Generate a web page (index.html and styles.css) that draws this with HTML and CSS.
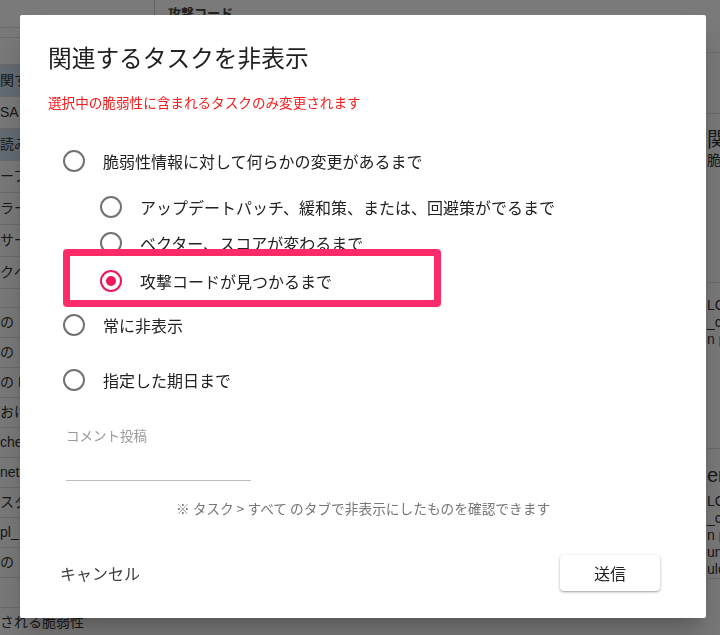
FILE: index.html
```html
<!DOCTYPE html>
<html lang="ja">

<head>
    <meta charset="UTF-8">
    <meta name="viewport" content="width=device-width, initial-scale=1.0">
    <title>関連するタスクを非表示</title>
    <link rel="stylesheet" href="styles.css">
</head>

<body>
    <div class="page">
        <div class="list-col">
            <div class="list-head"></div>
            <div class="list-sub"></div>
            <ul class="vuln-list">
                <li class="row row-blank"></li>
                <li class="row row-active">関する脆弱性</li>
                <li class="row">SA e</li>
                <li class="row row-active">読み込み</li>
                <li class="row">ーフロー</li>
                <li class="row">ラー</li>
                <li class="row">サービス</li>
                <li class="row">クベース</li>
                <li class="row row-gap"></li>
                <li class="row row-short">の</li>
                <li class="row row-short">の</li>
                <li class="row row-short">の R</li>
                <li class="row row-short">おける</li>
                <li class="row row-short">chesa</li>
                <li class="row row-short">netlink</li>
                <li class="row row-short">スタック</li>
                <li class="row row-short">pl_</li>
                <li class="row row-short">の</li>
                <li class="row row-short"></li>
                <li class="row row-short">される脆弱性</li>
            </ul>
        </div>

        <div class="main-col">
            <div class="main-head">攻撃コード</div>
        </div>

        <aside class="detail">
            <div class="detail-block detail-top"></div>
            <div class="detail-block detail-mid"></div>
            <div class="detail-block detail-info">
                <h2>関連する脆弱性</h2>
                <p>脆弱性</p>
            </div>
            <div class="detail-block detail-code">
                <p>LGPL</p>
                <p>_cpe</p>
                <p>n pa</p>
            </div>
            <div class="detail-block">
                <h2>en</h2>
                <p>LGPL</p>
                <p>_cpe</p>
                <p>n pa</p>
                <p>unc</p>
                <p>uld</p>
            </div>
        </aside>
    </div>

    <div class="backdrop"></div>

    <div class="dialog">
        <h1 class="dialog-title">関連するタスクを非表示</h1>
        <p class="dialog-warning">選択中の脆弱性に含まれるタスクのみ変更されます</p>

        <div class="options">
            <label class="option">
                <span class="radio"></span>
                <span>脆弱性情報に対して何らかの変更があるまで</span>
            </label>
            <label class="option option-sub option-sub-first">
                <span class="radio"></span>
                <span>アップデートパッチ、緩和策、または、回避策がでるまで</span>
            </label>
            <label class="option option-sub">
                <span class="radio"></span>
                <span>ベクター、スコアが変わるまで</span>
            </label>
            <label class="option option-sub option-picked">
                <span class="radio radio-on"></span>
                <span>攻撃コードが見つかるまで</span>
            </label>
            <label class="option option-always">
                <span class="radio"></span>
                <span>常に非表示</span>
            </label>
            <label class="option option-date">
                <span class="radio"></span>
                <span>指定した期日まで</span>
            </label>
        </div>

        <div class="comment">
            <div class="comment-label">コメント投稿</div>
            <div class="comment-input"></div>
        </div>

        <p class="note">※ タスク &gt; すべて のタブで非表示にしたものを確認できます</p>

        <div class="actions">
            <button class="btn-text">キャンセル</button>
            <button class="btn-raised">送信</button>
        </div>

        <div class="mark"></div>
    </div>
</body>

</html>
```

FILE: styles.css
```css
body {
    margin: 0;
    overflow: hidden;
    font-family: "Liberation Sans", "Noto Sans CJK JP", sans-serif;
    background-color: #fff;
    color: #333;
}

/* page behind the dialog */

.page {
    display: flex;
    height: 635px;
}

.list-col {
    width: 155px;
    flex: none;
}

.list-head {
    height: 28px;
    border-right: 1px solid #d0d0d0;
    border-bottom: 1px solid #ddd;
    box-sizing: border-box;
}

.list-sub {
    height: 9px;
    border-bottom: 1px solid #ddd;
}

.vuln-list {
    list-style: none;
    margin: 0;
    padding: 0;
}

.row {
    height: 31px;
    line-height: 31px;
    border-bottom: 1px solid #ddd;
    font-size: 14px;
    white-space: nowrap;
    overflow: hidden;
}

.row-blank {
    height: 26px;
}

.row-gap {
    height: 18px;
}

.row-short {
    height: 29px;
    line-height: 29px;
}

.row-active {
    background-color: #cfe0f2;
}

.main-col {
    width: 551px;
    flex: none;
}

.main-head {
    padding: 3px 0 0 13px;
    font-size: 13px;
    font-weight: bold;
    color: #444;
}

.detail {
    flex: none;
    width: 200px;
    padding-left: 1px;
    white-space: nowrap;
}

.detail-block {
    border-bottom: 1px solid #ddd;
}

.detail-top {
    height: 52px;
}

.detail-mid {
    height: 60px;
}

.detail-info {
    height: 168px;
}

.detail-code {
    height: 165px;
}

.detail h2 {
    margin: 0;
    padding-top: 14px;
    font-size: 20px;
    font-weight: normal;
    line-height: 24px;
}

.detail p {
    margin: 0;
    font-size: 14px;
    line-height: 17px;
}

.detail-info p {
    padding-top: 0;
}

.detail-code p:first-child {
    padding-top: 14px;
}

.detail h2 + p {
    padding-top: 6px;
}

.detail-info h2 + p {
    padding-top: 0;
}

/* dialog */

.backdrop {
    position: fixed;
    inset: 0;
    background-color: rgba(0, 0, 0, 0.52);
}

.dialog {
    position: fixed;
    left: 20px;
    top: 15px;
    width: 686px;
    box-sizing: border-box;
    padding: 26px 28px 27px;
    background-color: #fff;
    border-radius: 2px;
    box-shadow: 0 11px 15px -7px rgba(0, 0, 0, 0.2), 0 24px 38px 3px rgba(0, 0, 0, 0.14);
    font-family: "Noto Sans CJK JP", sans-serif;
    color: #222;
}

.dialog-title {
    margin: 0;
    font-size: 23.7px;
    font-weight: normal;
    line-height: 32px;
    color: #212121;
}

.dialog-warning {
    margin: 19px 0 0;
    font-size: 13.6px;
    line-height: 20px;
    color: #f41c1c;
}

.options {
    margin-top: 31px;
}

.option {
    display: flex;
    align-items: center;
    gap: 18px;
    height: 36px;
    padding-left: 15px;
    font-size: 16px;
    white-space: nowrap;
}

.option-sub {
    padding-left: 52px;
}

.option-sub-first {
    margin-top: 10px;
}

.option-picked {
    margin-top: 2px;
}

.option-always {
    margin-top: 8px;
}

.option-date {
    margin-top: 19px;
}

.radio {
    width: 22px;
    height: 22px;
    box-sizing: border-box;
    border: 2px solid #727272;
    border-radius: 50%;
    flex: none;
    display: flex;
    align-items: center;
    justify-content: center;
}

.radio-on {
    border-color: #f01858;
}

.radio-on::after {
    content: "";
    width: 10px;
    height: 10px;
    border-radius: 50%;
    background-color: #f01858;
}

.comment {
    margin: 28px 0 0 18px;
    width: 185px;
}

.comment-label {
    font-size: 13.5px;
    line-height: 18px;
    color: #9a9a9a;
}

.comment-input {
    height: 36px;
    border-bottom: 1px solid #bdbdbd;
}

.note {
    margin: 18px 0 0;
    font-size: 13.7px;
    line-height: 18px;
    color: #767676;
    text-align: center;
}

.actions {
    margin-top: 38px;
    display: flex;
    justify-content: space-between;
    align-items: center;
    padding: 0 18px 0 12px;
}

.btn-text {
    border: none;
    background: none;
    padding: 0;
    font: 16px "Noto Sans CJK JP", sans-serif;
    color: #3c3c3c;
    cursor: pointer;
}

.btn-raised {
    width: 100px;
    height: 36px;
    border: none;
    border-radius: 4px;
    background-color: #fff;
    box-shadow: 0 1px 3px rgba(0, 0, 0, 0.3), 0 1px 1px rgba(0, 0, 0, 0.1);
    font: 16px "Noto Sans CJK JP", sans-serif;
    color: #222;
    cursor: pointer;
}

/* annotation frame round the picked option */
.mark {
    position: absolute;
    left: 43px;
    top: 234px;
    width: 378px;
    height: 58px;
    box-sizing: border-box;
    border: 7px solid #fd2b69;
    border-radius: 4px;
}
```
